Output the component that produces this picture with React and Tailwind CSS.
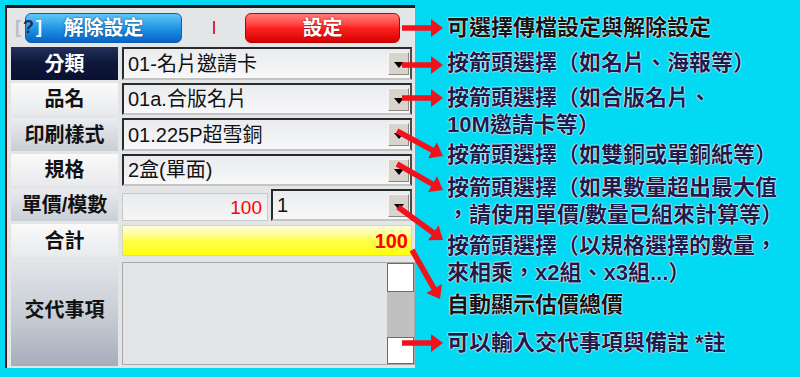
import React from 'react';

const Arrow = ({ x1, y1, x2, y2 }) => {
  const dx = x2 - x1;
  const dy = y2 - y1;
  const len = Math.hypot(dx, dy);
  const ux = dx / len;
  const uy = dy / len;
  const px = -uy;
  const py = ux;
  const head = 12;
  const hw = 9;
  const sw = 2.8;
  const bx = x2 - ux * head;
  const by = y2 - uy * head;
  const pts = [
    [x1 + px * sw, y1 + py * sw],
    [bx + px * sw, by + py * sw],
    [bx + px * hw, by + py * hw],
    [x2, y2],
    [bx - px * hw, by - py * hw],
    [bx - px * sw, by - py * sw],
    [x1 - px * sw, y1 - py * sw],
  ];
  return <polygon points={pts.map((p) => p.map((n) => n.toFixed(1)).join(',')).join(' ')} fill="#f2121c" />;
};

const arrows = [
  { x1: 402, y1: 28, x2: 443, y2: 28 },
  { x1: 402, y1: 65, x2: 443, y2: 65 },
  { x1: 402, y1: 98, x2: 443, y2: 98 },
  { x1: 397, y1: 131, x2: 443, y2: 156 },
  { x1: 397, y1: 164, x2: 443, y2: 190 },
  { x1: 398, y1: 207, x2: 443, y2: 240 },
  { x1: 412, y1: 250, x2: 440, y2: 299 },
  { x1: 402, y1: 343, x2: 443, y2: 343 },
];

const Drop = () => (
  <div className="w-[21px] h-[23px] shrink-0 flex items-center justify-center bg-[#d8d4cc] border border-t-[#f4f4f4] border-l-[#f4f4f4] border-r-[#8c8880] border-b-[#8c8880]">
    <svg width="10" height="6" viewBox="0 0 10 6" className="mt-[3px]">
      <polygon points="0,0 10,0 5,6" fill="#000" />
    </svg>
  </div>
);

const Select = ({ value, className = '' }) => (
  <div
    className={`flex items-center h-full border-2 border-t-[#2a2a2a] border-l-[#2a2a2a] border-r-[#4a4a4a] border-b-[#c4c4c4] bg-linear-to-b from-[#e9ebee] to-[#f8f8f9] pl-[4px] pr-[1px] ${className}`}
  >
    <span className="flex-1 text-[20px] leading-none text-[#111]">{value}</span>
    <Drop />
  </div>
);

const Label = ({ children, className = '' }) => (
  <div className={`flex items-center justify-center text-[20px] font-bold leading-none ${className}`}>{children}</div>
);

const Panel = () => (
  <div className="mt-[5px] ml-[5px] w-[410px] h-[363px] shrink-0 flex flex-col bg-[#e4e5e7] border-t-[3px] border-l-[2px] border-t-[#1b1b1b] border-l-[#4a1c1c]">
    {/* buttons */}
    <div className="relative flex items-center h-[39px] pl-[18px]">
      <span className="absolute z-10 left-[8px] top-[10px] text-[18px] tracking-[2px] font-bold leading-none text-[#b8bcc8]">
        [<span className="text-[#1c2b5e]">?</span><span className="text-white">]</span>
      </span>
      <div className="w-[157px] h-[30px] rounded-[6px] flex items-center justify-center bg-linear-to-b from-[#5ec8f6] via-[#2096e6] to-[#0a62c6] border border-[#0c5fb0] text-white text-[20px] font-bold [text-shadow:0_0_2px_#0a3c80]">
        解除設定
      </div>
      <div className="w-[2px] h-[13px] bg-[#d8284a] ml-[31px]" />
      <div className="w-[155px] h-[30px] ml-[30px] rounded-[6px] flex items-center justify-center bg-linear-to-b from-[#ff7a7a] via-[#ff1f1f] to-[#d60000] border border-[#c00000] text-white text-[20px] font-bold [text-shadow:0_0_2px_#8a0000]">
        設定
      </div>
    </div>

    {/* form rows */}
    <div className="grid grid-cols-[107px_290px] grid-rows-[33px_32px_33px_32px_32px_33px_106px] gap-x-[4px] gap-y-[3px] pl-[4px]">
      <Label className="bg-linear-to-b from-[#24305a] via-[#0e1739] to-[#0a1030] text-white">分類</Label>
      <Select value="01-名片邀請卡" />

      <Label className="bg-linear-to-b from-[#fafafa] to-[#e9eaec] text-[#111]">品名</Label>
      <Select value="01a.合版名片" />

      <Label className="bg-linear-to-b from-[#e9ecf0] to-[#c9ced6] text-[#111]">印刷樣式</Label>
      <Select value="01.225P超雪銅" />

      <Label className="bg-linear-to-b from-[#fafafa] to-[#e9eaec] text-[#111]">規格</Label>
      <Select value="2盒(單面)" />

      <Label className="bg-linear-to-b from-[#e9ecf0] to-[#c9ced6] text-[#111]">單價/模數</Label>
      <div className="flex items-end gap-[3px]">
        <div className="w-[146px] h-[28px] flex items-center justify-end pr-[5px] bg-linear-to-b from-[#e9ebee] to-[#f6f6f7] border border-[#c8c8c8] text-[19px] leading-none text-[#ff0000]">
          100
        </div>
        <Select value="1" className="w-[141px]" />
      </div>

      <Label className="bg-linear-to-b from-[#fafafa] to-[#e9eaec] text-[#111]">合計</Label>
      <div className="flex items-center justify-end pr-[3px] my-[1px] bg-linear-to-b from-[#ffffd8] via-[#ffff48] to-[#ffff00] border border-[#d8d8a8] text-[20px] font-bold leading-none text-[#ff0000]">
        100
      </div>

      <Label className="bg-linear-to-b from-[#e2e5e9] via-[#c9ced6] to-[#a7aeba] text-[#111] pb-[6px]">交代事項</Label>
      <div className="w-[293px] h-[103px] mt-[2px] flex justify-end bg-[#e3e5e8] border border-[#a8a8a8]">
        <div className="w-[27px] flex flex-col">
          <div className="h-[29px] bg-white border border-[#6c6c6c]" />
          <div className="flex-1 bg-[#c0c0c0]" />
          <div className="h-[27px] bg-white border border-[#6c6c6c]" />
        </div>
      </div>
    </div>
  </div>
);

const Notes = () => (
  <div className="ml-[32px] pt-[14px] flex flex-col text-[22px] leading-[27px] font-bold text-[#1c1c4e] whitespace-nowrap [text-shadow:0_0_2px_#fff,0_0_1px_#fff,0_0_1px_#fff]">
    <div className="text-[#151515]">可選擇傳檔設定與解除設定</div>
    <div className="mt-[8px]">按箭頭選擇（如名片、海報等）</div>
    <div className="mt-[8px]">
      按箭頭選擇（如合版名片、
      <br />
      10M邀請卡等）
    </div>
    <div className="mt-[3px]">按箭頭選擇（如雙銅或單銅紙等）</div>
    <div className="mt-[6px]">
      按箭頭選擇（如果數量超出最大值
      <br />
      ，請使用單價/數量已組來計算等）
    </div>
    <div className="mt-[4px]">
      按箭頭選擇（以規格選擇的數量，
      <br />
      來相乘，x2組、x3組...）
    </div>
    <div className="mt-[5px] text-[#151515]">自動顯示估價總價</div>
    <div className="mt-[11px]">可以輸入交代事項與備註 *註</div>
  </div>
);

export default function App() {
  return (
    <div className="relative w-[800px] h-[377px] overflow-hidden flex items-start bg-[#02d9f3] font-['Liberation_Sans','Noto_Sans_CJK_TC',sans-serif]">
      <Panel />
      <Notes />
      <svg className="absolute inset-0 pointer-events-none" width="800" height="377" viewBox="0 0 800 377">
        {arrows.map((a, i) => (
          <Arrow key={i} {...a} />
        ))}
      </svg>
    </div>
  );
}
